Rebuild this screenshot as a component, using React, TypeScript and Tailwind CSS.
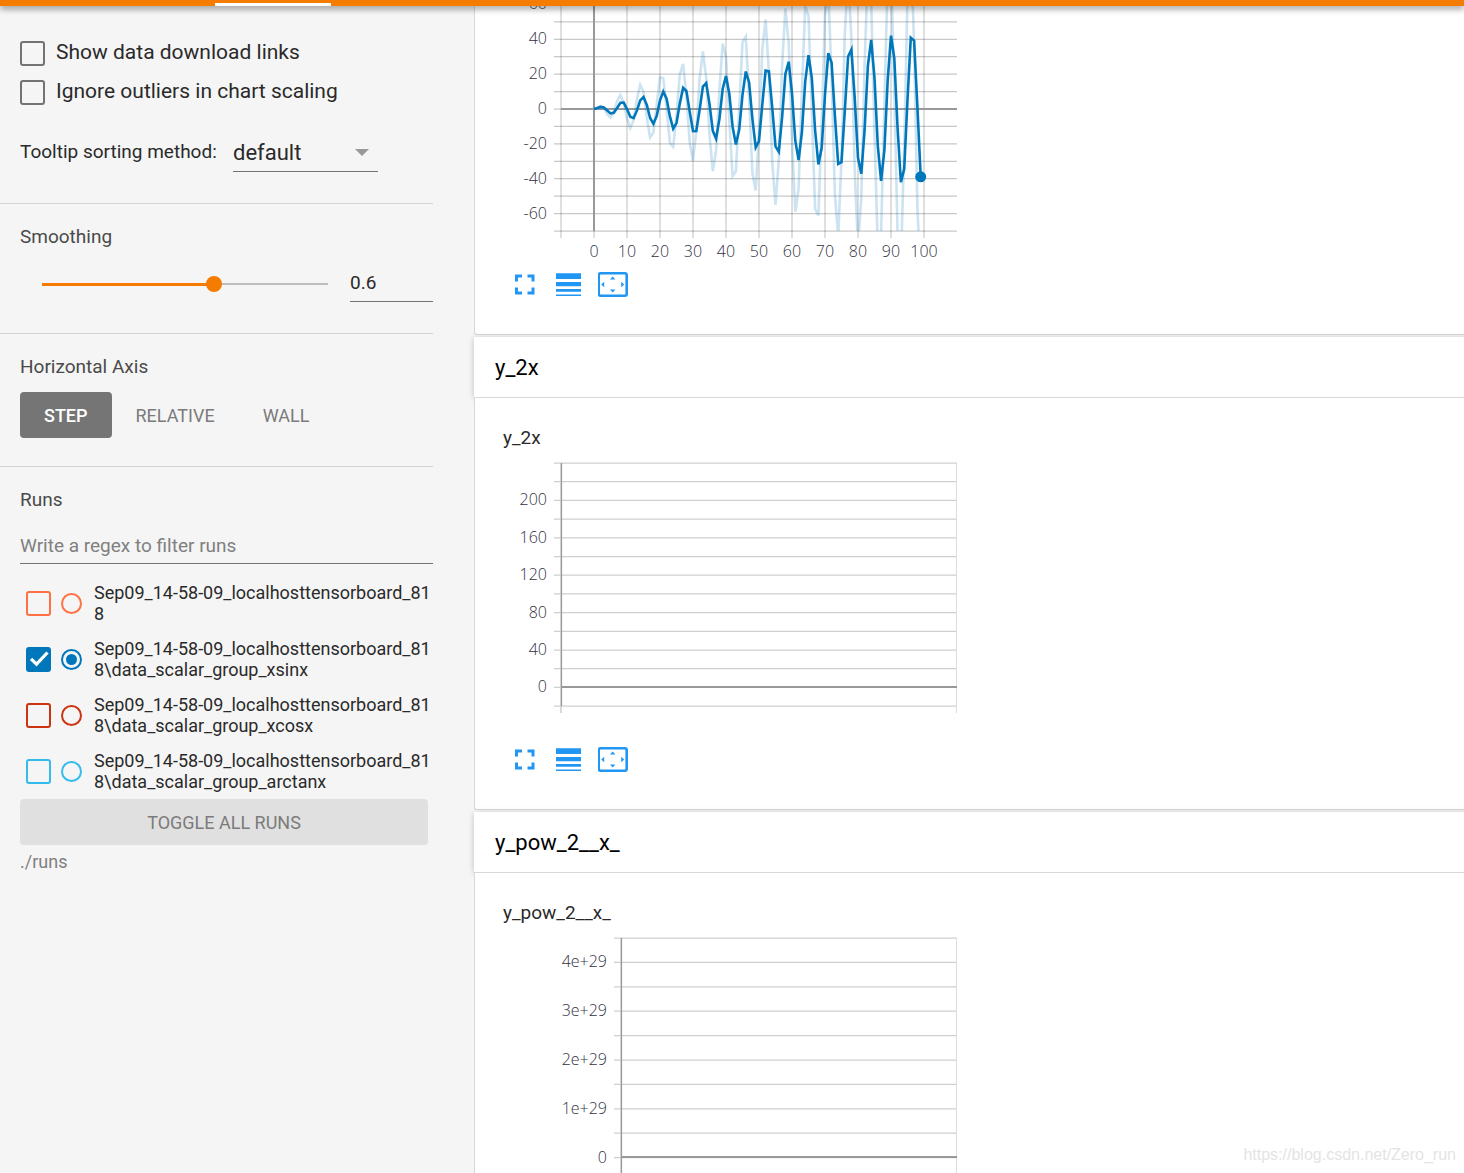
import { useState } from "react";

const SIZE = 100;
const raw = Array.from({ length: SIZE }, (_, x) => x * Math.sin(x));

// exponential moving average with debiasing
const smooth = (values: number[], weight: number) => {
  let last = 0;
  return values.map((value, i) => {
    last = last * weight + (1 - weight) * value;
    return last / (1 - Math.pow(weight, i + 1));
  });
};

const toX = (step: number) => 91 + step * 3.3;
const toY = (value: number) => 103 - value * 1.743;
const toPoints = (values: number[]) =>
  values.map((value, i) => `${toX(i)},${toY(value)}`).join(" ");

const runs = [
  {
    name: "Sep09_14-58-09_localhosttensorboard_818",
    color: "text-[#ff7043]",
    checked: false,
  },
  {
    name: "Sep09_14-58-09_localhosttensorboard_818\\data_scalar_group_xsinx",
    color: "text-[#0077bb]",
    checked: true,
  },
  {
    name: "Sep09_14-58-09_localhosttensorboard_818\\data_scalar_group_xcosx",
    color: "text-[#cc3311]",
    checked: false,
  },
  {
    name: "Sep09_14-58-09_localhosttensorboard_818\\data_scalar_group_arctanx",
    color: "text-[#33bbee]",
    checked: false,
  },
];

const axisText = "fill-[#32323f] font-['Open_Sans',sans-serif] text-base font-light";

const ScalarChart = ({ smoothing }: { smoothing: number }) => {
  const smoothed = smooth(raw, smoothing);
  const xTicks = Array.from({ length: 12 }, (_, i) => i * 10 - 10);
  const yTicks = Array.from({ length: 14 }, (_, i) => i * 10 - 70);
  return (
    <svg className="block h-[256px] w-[456px]" viewBox="0 0 456 256">
      <clipPath id="plot">
        <rect x="58" y="0" width="396" height="225" />
      </clipPath>
      {yTicks.map((v) => (
        <line key={v} x1="51" x2="454" y1={toY(v)} y2={toY(v)} stroke="#c8c8c8" strokeWidth="1.25" />
      ))}
      {xTicks.map((v) => (
        <line key={v} x1={toX(v)} x2={toX(v)} y1="0" y2="232" stroke="#000" strokeOpacity="0.17" strokeWidth="1.5" />
      ))}
      <line x1="58" x2="454" y1="103" y2="103" stroke="#999" strokeWidth="2" />
      <line x1="91" x2="91" y1="0" y2="225" stroke="#999" strokeWidth="2" />
      <g clipPath="url(#plot)" fill="none" stroke="#0077bb" strokeWidth="2.6">
        <polyline points={toPoints(raw)} strokeOpacity="0.2" />
        <polyline points={toPoints(smoothed)} />
      </g>
      <circle cx={toX(SIZE - 1)} cy={toY(smoothed[SIZE - 1])} r="5.5" fill="#0077bb" />
      {[60, 40, 20, 0, -20, -40, -60].map((v) => (
        <text key={v} x="44" y={toY(v) + 5} textAnchor="end" className={axisText}>
          {v}
        </text>
      ))}
      {xTicks.slice(1).map((v) => (
        <text key={v} x={toX(v)} y="251" textAnchor="middle" className={axisText}>
          {v}
        </text>
      ))}
    </svg>
  );
};

type EmptyChartProps = {
  left: number;
  step: number;
  zero: number;
  lines: number;
  labels: string[];
  firstLabel: number;
};

// chart of a tag that has no data in the selected run
const EmptyChart = ({ left, step, zero, lines, labels, firstLabel }: EmptyChartProps) => {
  const bottom = lines * step;
  return (
    <svg className="block h-[265px] w-[456px]" viewBox="0 0 456 265">
      {Array.from({ length: lines + 1 }, (_, i) => (
        <line key={i} x1={left - 7} x2="454" y1={i * step + 1} y2={i * step + 1} stroke="#cfcfcf" strokeWidth="1.25" />
      ))}
      <line x1="453.5" x2="453.5" y1="1" y2={bottom + 8} stroke="#ddd" />
      <line x1={left} x2={left} y1="1" y2={bottom + 8} stroke="#ccc" strokeWidth="1.5" />
      <line x1={left + 0.5} x2={left + 0.5} y1="1" y2={bottom + 1} stroke="#999" strokeWidth="1.2" />
      <line x1={left} x2="454" y1={zero} y2={zero} stroke="#999" strokeWidth="2" />
      {labels.map((label, i) => (
        <text
          key={label}
          x={left - 14}
          y={(firstLabel + i * 2) * step + 6}
          textAnchor="end"
          className={axisText}
        >
          {label}
        </text>
      ))}
    </svg>
  );
};

const ChartActions = () => (
  <div className="flex h-[30px] items-center gap-[14px] pl-[7px] text-[#2196f3]">
    <button type="button" aria-label="Toggle full size">
      <svg className="h-[30px] w-[30px]" viewBox="0 0 30 30" fill="none" stroke="currentColor" strokeWidth="3">
        <path d="M6.500 11.500V6H12M17.500 6H23V11.500M23 17.500V23H17.500M12 23H6.500V17.500" />
      </svg>
    </button>
    <button type="button" aria-label="Toggle y-axis log scale">
      <svg className="h-[30px] w-[30px]" viewBox="0 0 30 30" fill="currentColor">
        <path d="M2 3.200h25v5.800h-25zM2 12h25v4.200h-25zM2 19h25v2.700h-25zM2 24.600h25v1.400h-25z" />
      </svg>
    </button>
    <button type="button" aria-label="Fit domain to data">
      <svg className="h-[30px] w-[30px]" viewBox="0 0 30 30" fill="currentColor">
        <rect x="0.700" y="3.200" width="28" height="22.600" rx="2" fill="none" stroke="currentColor" strokeWidth="2.600" />
        <path d="M14.700 6.500l2.700 3h-5.400zM14.700 22.500l2.700-3h-5.400zM3.200 14.500l3-2.700v5.400zM26.200 14.500l-3-2.700v5.400z" />
      </svg>
    </button>
  </div>
);

const CategoryHeader = ({ name }: { name: string }) => (
  <button
    type="button"
    className="relative block h-[60px] w-[calc(100%+8px)] bg-white pl-[21px] text-left text-[22px] text-black shadow-[0_1px_6px_rgba(0,0,0,0.22)]"
  >
    {name}
  </button>
);

const RunRow = ({ name, color, checked }: (typeof runs)[number]) => (
  <li className="flex h-[56px] items-center pl-[6px]">
    <label className={`relative mr-[10px] flex ${color}`}>
      <input
        type="checkbox"
        aria-label={`Show ${name}`}
        defaultChecked={checked}
        className="peer size-[25px] appearance-none rounded-[3px] border-2 border-current checked:bg-current"
      />
      <svg
        className="pointer-events-none absolute inset-0 hidden size-[25px] peer-checked:block"
        viewBox="0 0 25 25"
        fill="none"
        stroke="#fff"
        strokeWidth="3.2"
      >
        <path d="M5 11.800l5.500 5.400L21.500 5.500" />
      </svg>
    </label>
    <label className={`relative mr-3 flex ${color}`}>
      <input
        type="radio"
        name="run"
        aria-label={`Only ${name}`}
        defaultChecked={checked}
        className="peer size-[21px] appearance-none rounded-full border-2 border-current"
      />
      <span className="pointer-events-none absolute inset-[5px] hidden rounded-full bg-current peer-checked:block" />
    </label>
    <span className="w-[338px] text-[18px] leading-[21px] break-all">{name}</span>
  </li>
);

const Sidebar = ({
  smoothing,
  onSmoothing,
}: {
  smoothing: number;
  onSmoothing: (value: number) => void;
}) => {
  const [axis, setAxis] = useState("STEP");
  const percent = smoothing * 100;
  return (
    <aside className="w-[474px] shrink-0 bg-[#f5f5f5] pr-[41px]">
      <section className="h-[198px] border-b border-[#d4d4d4] pt-[34px] pl-5">
        {["Show data download links", "Ignore outliers in chart scaling"].map((label) => (
          <label key={label} className="mb-[13px] flex h-[26px] items-center gap-[11px] text-[21px]">
            <input
              type="checkbox"
              className="size-[25px] appearance-none rounded-[3px] border-2 border-[#737373] checked:bg-[#737373]"
            />
            {label}
          </label>
        ))}
        <div className="mt-7 flex items-center">
          <label htmlFor="sorting" className="w-[213px] text-[19px]">
            Tooltip sorting method:
          </label>
          <div className="relative w-[145px] border-b border-[#737373]">
            <select id="sorting" className="h-[38px] w-full appearance-none text-[22px]">
              <option>default</option>
              <option>descending</option>
              <option>ascending</option>
              <option>nearest</option>
            </select>
            <svg
              className="pointer-events-none absolute top-4 right-[9px] h-[7px] w-[14px]"
              viewBox="0 0 14 7"
              fill="#999"
            >
              <path d="M0 0h14L7 7z" />
            </svg>
          </div>
        </div>
      </section>

      <section className="h-[130px] border-b border-[#d4d4d4] pt-[21px] pl-5">
        <h3 className="text-[19px] leading-6 text-[#4a4a4a]">Smoothing</h3>
        <div className="mt-[14px] flex items-center">
          <div className="relative mx-[22px] mt-[3px] flex h-4 flex-1 items-center">
            <div className="h-[2px] w-full bg-[#bdbdbd]" />
            <div className="absolute left-0 h-[3px] bg-[#f57c00]" style={{ width: `${percent}%` }} />
            <input
              type="range"
              aria-label="Smoothing"
              min="0"
              max="1"
              step="0.001"
              value={smoothing}
              onChange={(e) => onSmoothing(Number(e.target.value))}
              className="absolute -inset-x-2 appearance-none bg-transparent [&::-webkit-slider-thumb]:size-4 [&::-webkit-slider-thumb]:appearance-none [&::-webkit-slider-thumb]:rounded-full [&::-webkit-slider-thumb]:bg-[#f57c00]"
            />
          </div>
          <input
            aria-label="Smoothing value"
            value={smoothing}
            onChange={(e) => onSmoothing(Number(e.target.value) || 0)}
            className="h-[39px] w-[83px] border-b border-[#737373] text-[19px] outline-none"
          />
        </div>
      </section>

      <section className="h-[133px] border-b border-[#d4d4d4] pt-[21px] pl-5">
        <h3 className="text-[19px] leading-6 text-[#4a4a4a]">Horizontal Axis</h3>
        <div className="mt-[13px] flex">
          {["STEP", "RELATIVE", "WALL"].map((name) => (
            <button
              key={name}
              type="button"
              onClick={() => setAxis(name)}
              className={
                name === axis
                  ? "h-[46px] rounded-[4px] bg-[#757575] px-6 text-[18px] font-medium text-white"
                  : "h-[46px] px-6 text-[18px] text-[#7b7b7b]"
              }
            >
              {name}
            </button>
          ))}
        </div>
      </section>

      <section className="pt-[21px] pl-5">
        <h3 className="text-[19px] leading-6 text-[#4a4a4a]">Runs</h3>
        <input
          aria-label="Filter runs"
          placeholder="Write a regex to filter runs"
          className="mt-[15px] h-[37px] w-full border-b border-[#737373] text-[19px] outline-none placeholder:text-[#808080]"
        />
        <ul className="mt-[11px]">
          {runs.map((run) => (
            <RunRow key={run.name} {...run} />
          ))}
        </ul>
        <button
          type="button"
          className="block h-[46px] w-[408px] rounded-[4px] bg-[#e0e0e0] text-[18px] text-[#7b7b7b]"
        >
          TOGGLE ALL RUNS
        </button>
        <p className="mt-[5px] text-[18px] leading-6 text-[#808080]">./runs</p>
      </section>
    </aside>
  );
};

const App = () => {
  const [smoothing, setSmoothing] = useState(0.6);
  return (
    <div className="flex h-screen flex-col overflow-hidden bg-[#f5f5f5] font-[Roboto,sans-serif] text-[#2a2a2a]">
      <header className="relative z-10 flex h-[6px] shrink-0 items-end bg-[#f57c00] pl-[215px] shadow-[0_3px_6px_rgba(0,0,0,0.4)]">
        <div className="h-[3px] w-[116px] bg-white" />
      </header>
      <div className="flex min-h-0 flex-1">
        <Sidebar smoothing={smoothing} onSmoothing={setSmoothing} />
        <main className="min-w-0 flex-1">
          <section className="mb-[2px] h-[329px] rounded-bl-[3px] border-b border-l border-[#d8d8d8] bg-white pl-[28px]">
            <ScalarChart smoothing={smoothing} />
            <div className="mt-2">
              <ChartActions />
            </div>
          </section>

          <CategoryHeader name="y_2x" />
          <section className="relative mb-[2px] h-[413px] rounded-bl-[3px] border border-r-0 border-[#d8d8d8] bg-white pl-[28px]">
            <h4 className="pt-7 text-[19px] leading-6">y_2x</h4>
            <div className="mt-3">
              <EmptyChart
                left={58}
                step={18.7}
                zero={225}
                lines={13}
                labels={["200", "160", "120", "80", "40", "0"]}
                firstLabel={2}
              />
            </div>
            <div className="mt-[18px]">
              <ChartActions />
            </div>
          </section>

          <CategoryHeader name="y_pow_2__x_" />
          <section className="relative border border-r-0 border-[#d8d8d8] bg-white pb-10 pl-[28px]">
            <h4 className="pt-7 text-[19px] leading-6">y_pow_2__x_</h4>
            <div className="mt-3">
              <EmptyChart
                left={118}
                step={24.4}
                zero={220}
                lines={10}
                labels={["4e+29", "3e+29", "2e+29", "1e+29", "0"]}
                firstLabel={1}
              />
            </div>
          </section>
        </main>
      </div>
      <a
        href="https://blog.csdn.net/Zero_run"
        className="absolute right-[8px] bottom-[6px] font-['Liberation_Sans',sans-serif] text-base text-[#e4e4e4]"
      >
        https://blog.csdn.net/Zero_run
      </a>
    </div>
  );
};

export default App;
